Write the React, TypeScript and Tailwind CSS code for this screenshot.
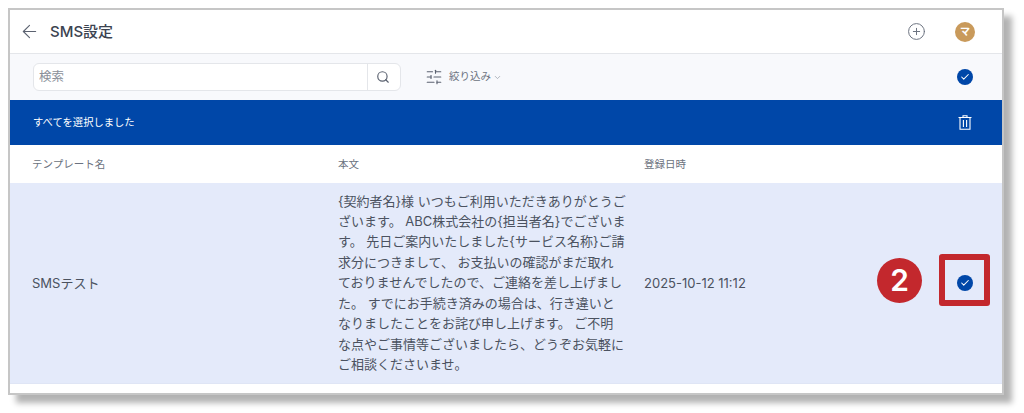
import { ArrowLeft, Check, ChevronDown, CirclePlus, Search, SlidersHorizontal } from "lucide-react";

const CheckCircle = () => (
  <span className="flex items-center justify-center rounded-full bg-[#0047a8] text-white w-[16px] h-[16px]">
    <Check className="w-[10px] h-[10px]" strokeWidth={2.5} />
  </span>
);

const App = () => {
  return (
    <div className="w-[1024px] h-[413px] bg-white font-['Inter','Noto_Sans_CJK_JP',sans-serif] pt-[8px] pl-[8px] overflow-hidden">
      <div className="w-[996px] h-[387px] border-2 border-[#c6c6c6] bg-white shadow-[8px_8px_6px_rgba(0,0,0,0.3)] flex flex-col">
        {/* header */}
        <div className="h-[44px] shrink-0 flex items-center border-b border-[#e4e6ea] pl-[9px] pr-[27px]">
          <ArrowLeft className="w-[21px] h-[21px] text-[#5b6270]" strokeWidth={1.25} />
          <h1 className="ml-[10px] pt-[1px] text-[15px] font-medium text-[#3c4350]">SMS設定</h1>
          <CirclePlus className="ml-auto w-[19px] h-[19px] text-[#6b7280]" strokeWidth={1.25} />
          <span className="ml-[29px] w-[20px] h-[20px] rounded-full bg-[#c99a5b] text-white text-[10px] font-bold flex items-center justify-center">マ</span>
        </div>
        {/* toolbar */}
        <div className="h-[46px] shrink-0 flex items-center bg-[#f8f9fc] pl-[23px] pr-[29px]">
          <div className="w-[368px] h-[28px] flex bg-white border border-[#e4e6ea] rounded-md">
            <input placeholder="検索" className="flex-1 min-w-0 px-[5px] text-[12.5px] outline-none placeholder:text-[#8a8f99]" />
            <span className="w-[33px] border-l border-[#e4e6ea] flex items-center justify-center">
              <Search className="w-[14px] h-[14px] text-[#5b6270] -ml-[2px]" strokeWidth={2} />
            </span>
          </div>
          <SlidersHorizontal className="ml-[24px] w-[18px] h-[18px] text-[#5b6270]" strokeWidth={1.5} />
          <span className="ml-[6px] text-[10.5px] text-[#6b7280]">絞り込み</span>
          <ChevronDown className="ml-[2px] w-[9px] h-[9px] text-[#9aa0aa]" />
          <span className="ml-auto">
            <CheckCircle />
          </span>
        </div>
        {/* selection bar */}
        <div className="h-[45px] shrink-0 flex items-center justify-between bg-[#0047a8] pl-[23px] pr-[30px] text-white">
          <span className="text-[10.3px] pt-[1px]">すべてを選択しました</span>
          <svg viewBox="0 0 14 15" className="w-[14px] h-[15px]" fill="none" stroke="currentColor" strokeWidth="1.1">
            <path d="M0.5 2.5H13.5M5 2.5V0.8H9V2.5M2 2.5V14.2H12V2.5M5.4 5V12M8.6 5V12" />
          </svg>
        </div>
        {/* table head */}
        <div className="h-[38px] shrink-0 grid grid-cols-[306px_306px_1fr] items-center pl-[22px] pt-[1px] text-[10.5px] text-[#6b7280]">
          <span>テンプレート名</span>
          <span>本文</span>
          <span>登録日時</span>
        </div>
        {/* row */}
        <div className="h-[201px] shrink-0 grid grid-cols-[306px_306px_1fr] items-center pl-[22px] pt-[1px] bg-[#e4eafa] border-b border-[#dfe5f5] text-[13px] text-[#4b5260]">
          <span>SMSテスト</span>
          <p className="w-[288px] leading-[20.4px] -mt-[2px]">
            {"{契約者名}様 いつもご利用いただきありがとうございます。 ABC株式会社の{担当者名}でございます。 先日ご案内いたしました{サービス名称}ご請求分につきまして、 お支払いの確認がまだ取れておりませんでしたので、ご連絡を差し上げました。 すでにお手続き済みの場合は、行き違いとなりましたことをお詫び申し上げます。 ご不明な点やご事情等ございましたら、どうぞお気軽にご相談くださいませ。"}
          </p>
          <div className="flex items-center justify-between pr-[12px]">
            <span>2025-10-12 11:12</span>
            <div className="flex items-center gap-[17px] -mt-[7px]">
              <span className="w-[45px] h-[45px] rounded-full bg-[#c3282d] text-white text-[30px] font-semibold flex items-center justify-center">2</span>
              <span className="w-[51px] h-[52px] rounded-[3px] border-[6px] border-[#c3282d] pt-[6px] flex items-center justify-center">
                <CheckCircle />
              </span>
            </div>
          </div>
        </div>
      </div>
    </div>
  );
};

export default App;
